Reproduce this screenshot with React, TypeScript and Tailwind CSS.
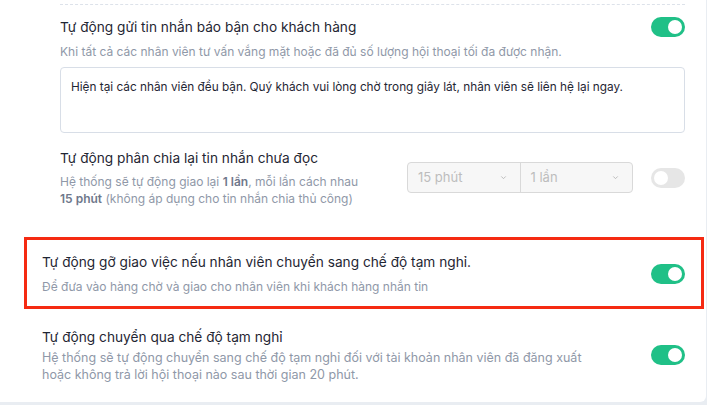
import React from "react";

function Toggle({ on }: { on: boolean }) {
  return (
    <div
      className={
        "relative h-[20px] w-[34px] shrink-0 rounded-full " +
        (on ? "bg-[#20c087]" : "bg-[#e6e6e6]")
      }
    >
      <div
        className={
          "absolute top-[3px] h-[14px] w-[14px] rounded-full bg-white " +
          (on ? "right-[3px]" : "left-[3px]")
        }
      />
    </div>
  );
}

function Chevron() {
  return (
    <svg width="9" height="9" viewBox="0 0 10 10" fill="none" className="shrink-0">
      <path d="M2.5 3.8 L5 6.3 L7.5 3.8" stroke="#b5b5b5" strokeWidth="1" />
    </svg>
  );
}

export default function App() {
  return (
    <div
      className="relative h-[405px] w-[707px] overflow-hidden bg-[#e9edf2]"
      style={{ fontFamily: "Inter, 'Noto Sans', sans-serif" }}
    >
      <div className="h-[402px] w-[706px] rounded-br-[6px] bg-white">
        <div className="pt-[4px] pl-[60px] pr-[21px]">
          <div className="border-t border-dashed border-[#dde2ea]" />
          <div className="mt-[12px] flex items-start justify-between">
            <div className="text-[13.7px] leading-[20px] text-[#1f2633]">
              Tự động gửi tin nhắn báo bận cho khách hàng
            </div>
            <Toggle on />
          </div>
          <div className="mt-[6px] text-[12px] leading-[18px] text-[#8f98a8]">
            Khi tất cả các nhân viên tư vấn vắng mặt hoặc đã đủ số lượng hội thoại tối đa được nhận.
          </div>
          <div className="mt-[6px] h-[66px] rounded-[4px] border border-[#d8dee7] px-[10px] pt-[9px] text-[11.8px] leading-[20px] text-[#1f2633]">
            Hiện tại các nhân viên đều bận. Quý khách vui lòng chờ trong giây lát, nhân viên sẽ liên hệ lại ngay.
          </div>
          <div className="mt-[15px] flex items-center">
            <div className="w-[347px]">
              <div className="text-[13.7px] leading-[20px] text-[#1f2633]">
                Tự động phân chia lại tin nhắn chưa đọc
              </div>
              <div className="mt-[5px] text-[12px] leading-[17px] text-[#8f98a8]">
                Hệ thống sẽ tự động giao lại <b className="font-semibold text-[#6f788b]">1 lần</b>, mỗi lần cách nhau
                <br />
                <b className="font-semibold text-[#6f788b]">15 phút</b> (không áp dụng cho tin nhắn chia thủ công)
              </div>
            </div>
            <div className="flex h-[31px] w-[226px] rounded-[4px] border border-[#d9d9d9] bg-[#f7f7f7]">
              <div className="flex flex-1 items-center justify-between border-r border-[#d9d9d9] pl-[10px] pr-[12px] text-[13px] text-[#bdbdbd]">
                <span>15 phút</span>
                <Chevron />
              </div>
              <div className="flex flex-1 items-center justify-between pl-[10px] pr-[12px] text-[13px] text-[#bdbdbd]">
                <span>1 lần</span>
                <Chevron />
              </div>
            </div>
            <div className="ml-auto">
              <Toggle on={false} />
            </div>
          </div>
        </div>

        <div className="mt-[32px] pl-[42px] pr-[21px]">
          <div className="border-t border-[#e9edf2]" />
          <div className="mt-[12px] flex items-center justify-between">
            <div>
              <div className="text-[13.7px] leading-[20px] text-[#1f2633]">
                Tự động gỡ giao việc nếu nhân viên chuyển sang chế độ tạm nghỉ.
              </div>
              <div className="mt-[6px] text-[12px] leading-[17px] text-[#8f98a8]">
                Để đưa vào hàng chờ và giao cho nhân viên khi khách hàng nhắn tin
              </div>
            </div>
            <Toggle on />
          </div>
          <div className="mt-[32px] flex items-center justify-between">
            <div>
              <div className="text-[13.7px] leading-[20px] text-[#1f2633]">
                Tự động chuyển qua chế độ tạm nghỉ
              </div>
              <div className="mt-[2px] text-[12.5px] leading-[17px] text-[#8f98a8]">
                Hệ thống sẽ tự động chuyển sang chế độ tạm nghỉ đối với tài khoản nhân viên đã đăng xuất
                <br />
                hoặc không trả lời hội thoại nào sau thời gian 20 phút.
              </div>
            </div>
            <Toggle on />
          </div>
        </div>
      </div>

      <div className="absolute left-[24px] top-[237px] h-[72px] w-[680px] border-[3px] border-[#f52a12]" />
    </div>
  );
}
